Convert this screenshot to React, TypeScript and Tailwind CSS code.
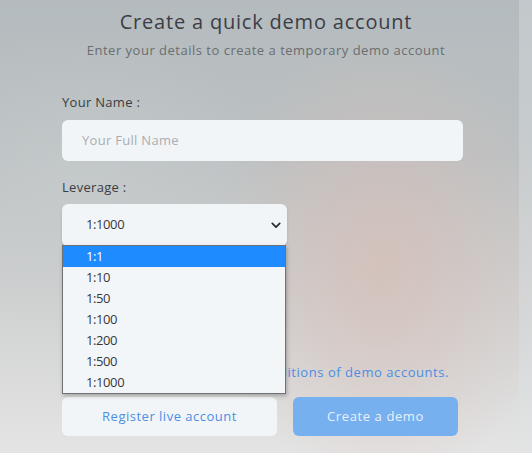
import React from "react";

const font = { fontFamily: "'Open Sans', 'Noto Sans', sans-serif" };

const options = ["1:1", "1:10", "1:50", "1:100", "1:200", "1:500", "1:1000"];

export default function App() {
  return (
    <div
      className="relative w-[532px] h-[453px] overflow-hidden bg-[radial-gradient(ellipse_170px_230px_at_72%_58%,rgba(214,190,182,0.75),rgba(214,190,182,0)_100%),radial-gradient(ellipse_200px_150px_at_15%_40%,rgba(200,205,206,0.6),rgba(200,205,206,0)_100%),linear-gradient(to_bottom,#b4bbbe_0%,#bcc1c3_35%,#cfd0d0_65%,#e4e4e4_100%)]"
      style={font}
    >
      <div className="absolute right-0 top-0 h-full w-[13px] bg-[rgba(220,226,230,0.35)]" />
      <div className="relative flex flex-col">
        <h1 className="mt-[8px] text-center text-[20px] leading-[28px] font-medium text-[#3b3e46] tracking-[0.8px]">
          Create a quick demo account
        </h1>
        <p className="mt-[5px] text-center text-[13px] leading-[18px] text-[#6b6d70] tracking-[0.5px]">
          Enter your details to create a temporary demo account
        </p>

        <div className="ml-[62px] w-[401px] flex flex-col">
          <label className="mt-[34px] text-[13px] leading-[18px] text-[#3b3d42] tracking-[0.3px]">Your Name :</label>
          <div className="mt-[9px] h-[41px] rounded-[6px] bg-[#f2f5f8] flex items-center pl-[20px]">
            <span className="text-[13px] text-[#a9adb3] tracking-[0.3px]">Your Full Name</span>
          </div>

          <label className="mt-[17px] text-[13px] leading-[18px] text-[#3b3d42] tracking-[0.3px]">Leverage :</label>
          <div className="mt-[8px] w-[225px] h-[42px] rounded-[6px] bg-[#f2f5f8] shadow-[0_2px_3px_rgba(0,0,0,0.12)] flex items-center justify-between pl-[24px] pr-[6px]">
            <span className="text-[13px] text-[#35373c] tracking-[-0.4px]">1:1000</span>
            <svg width="10" height="7" viewBox="0 0 10 7" fill="none">
              <path d="M1.3 1.4 L5 5.1 L8.7 1.4" stroke="#2b2d31" strokeWidth="1.8" strokeLinecap="round" strokeLinejoin="round" />
            </svg>
          </div>

          <div className="mt-[117px] pr-[14px] text-right text-[13px] leading-[18px] text-[#4a8fe4] whitespace-nowrap tracking-[0.55px]">
            I agree with the terms and conditions of demo accounts.
          </div>

          <div className="mt-[16px] flex gap-[16px]">
            <button className="w-[215px] h-[39px] rounded-[6px] bg-[#f2f5f8] text-[13px] text-[#4a8fe4] tracking-[0.5px]">
              Register live account
            </button>
            <button className="w-[165px] h-[39px] rounded-[6px] bg-[#76b0ee] text-[13px] font-medium text-[#e9f1fb] tracking-[0.6px]">
              Create a demo
            </button>
          </div>
        </div>
      </div>

      <div className="absolute left-[62px] top-[245px] w-[224px] border border-[#6f7175] bg-[#f3f6f9] shadow-[1px_2px_4px_rgba(0,0,0,0.25)]">
        {options.map((o, i) => (
          <div
            key={o}
            className={
              i === 0
                ? "h-[21px] pl-[23px] flex items-center text-[13px] tracking-[-0.4px] bg-[#1e8bff] text-white"
                : "h-[21px] pl-[23px] flex items-center text-[13px] tracking-[-0.4px] text-[#35373c]"
            }
          >
            {o}
          </div>
        ))}
      </div>
    </div>
  );
}
